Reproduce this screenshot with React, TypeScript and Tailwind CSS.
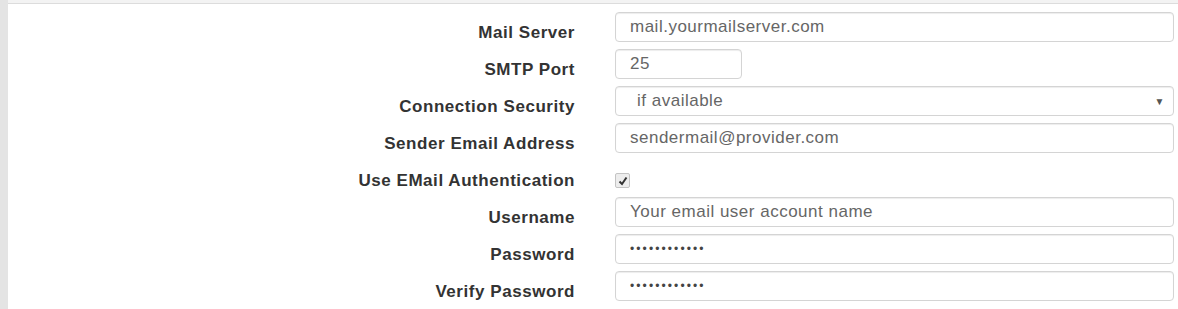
import React from "react";

const labelCls =
  "text-right font-bold text-[17px] tracking-[0.55px] leading-[30px] pt-[6px] text-[#333] whitespace-nowrap";
const inputCls =
  "h-[30px] border border-[#d4d4d4] rounded-[4px] bg-white shadow-[inset_0_1px_1px_rgba(0,0,0,0.075)] flex items-center pl-[14px] text-[17px] tracking-[0.5px] text-[#666]";

function Dots() {
  return (
    <span className="text-[12px] tracking-[2.1px] text-[#444] leading-none">
      ••••••••••••
    </span>
  );
}

export default function App() {
  return (
    <div
      className="w-[1178px] h-[309px] bg-[#f3f3f3] flex overflow-hidden"
      style={{ fontFamily: '"Liberation Sans", Arial, sans-serif' }}
    >
      <div className="w-[8px] bg-[#e4e4e4] shrink-0" />
      <div className="flex-1 mt-[3px] bg-white border-t border-[#dcdcdc] pt-[8px] pr-[4px]">
        <div className="grid grid-cols-[567px_1fr] gap-x-[40px] gap-y-[7px] auto-rows-[30px]">
          <div className={labelCls}>Mail Server</div>
          <div className={inputCls}>mail.yourmailserver.com</div>

          <div className={labelCls}>SMTP Port</div>
          <div className={inputCls + " w-[127px]"}>25</div>

          <div className={labelCls}>Connection Security</div>
          <div className={inputCls + " pl-[21px] justify-between pr-[8px]"}>
            <span>if available</span>
            <span className="text-[10px] text-[#555]">▼</span>
          </div>

          <div className={labelCls}>Sender Email Address</div>
          <div className={inputCls}>sendermail@provider.com</div>

          <div className={labelCls}>Use EMail Authentication</div>
          <div className="flex items-start pt-[13px]">
            <div className="w-[15px] h-[15px] border border-[#c4c4c4] rounded-[2px] bg-[#ededed] flex items-center justify-center">
              <svg width="10" height="10" viewBox="0 0 10 10">
                <path
                  d="M1.5 5.5 L4 8 L8.5 1.5"
                  fill="none"
                  stroke="#333"
                  strokeWidth="2"
                />
              </svg>
            </div>
          </div>

          <div className={labelCls}>Username</div>
          <div className={inputCls}>Your email user account name</div>

          <div className={labelCls}>Password</div>
          <div className={inputCls}>
            <Dots />
          </div>

          <div className={labelCls}>Verify Password</div>
          <div className={inputCls}>
            <Dots />
          </div>
        </div>
      </div>
    </div>
  );
}
